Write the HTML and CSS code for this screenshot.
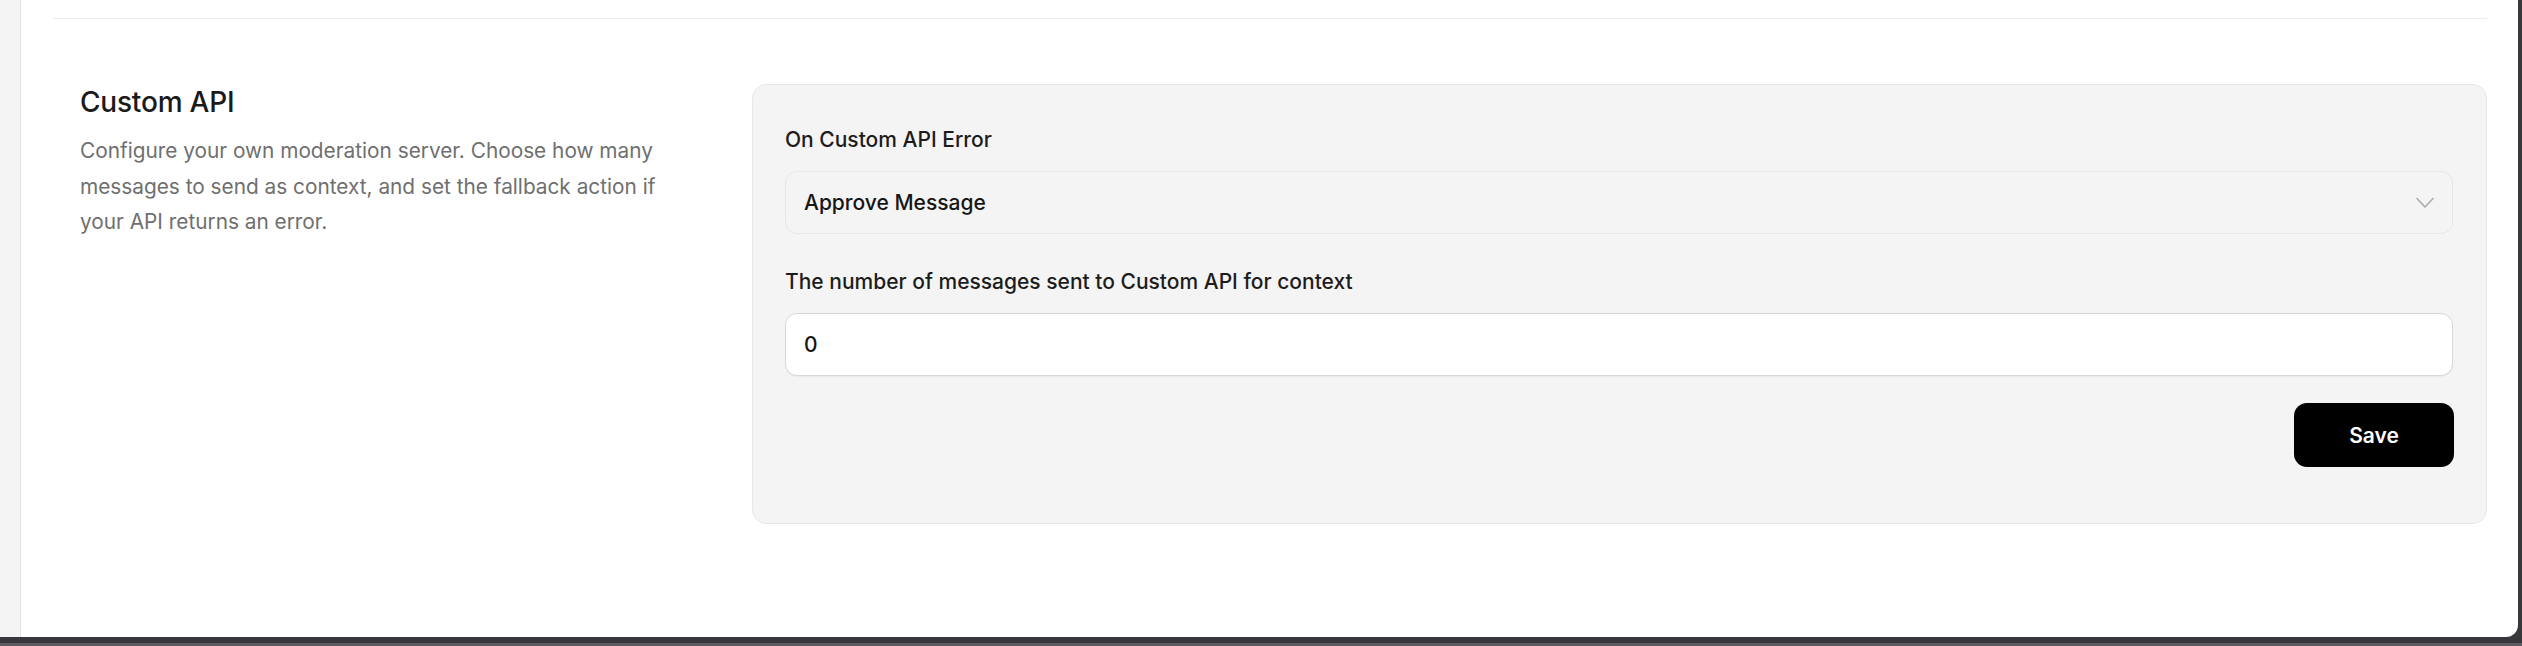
FILE: index.html
```html
<!DOCTYPE html>
<html lang="en">
<head>
<meta charset="utf-8">
<title>Custom API</title>
<link rel="stylesheet" href="styles.css">
</head>
<body>
<div class="window">
  <aside class="rail"></aside>
  <main class="main">
    <section class="settings-section">
      <div class="section-info">
        <h2 class="section-title">Custom API</h2>
        <p class="section-desc">Configure your own moderation server. Choose how many messages to send as context, and set the fallback action if your API returns an error.</p>
      </div>
      <form class="card" onsubmit="return false;">
        <div class="field">
          <label class="field-label" for="on-error">On Custom API Error</label>
          <div class="select">
            <span class="select-value" id="on-error">Approve Message</span>
            <svg class="chevron" width="18" height="12" viewBox="0 0 18 12" aria-hidden="true">
              <path d="M1 1.5 L9 10 L17 1.5" fill="none" stroke="#ababab" stroke-width="1.6" stroke-linecap="round" stroke-linejoin="round"/>
            </svg>
          </div>
        </div>
        <div class="field">
          <label class="field-label" for="ctx-count">The number of messages sent to Custom API for context</label>
          <input class="text-input" id="ctx-count" type="text" value="0">
        </div>
        <div class="actions">
          <button class="btn-save" type="submit">Save</button>
        </div>
      </form>
    </section>
  </main>
</div>
</body>
</html>
```

FILE: styles.css
```css
html, body {
  margin: 0;
  padding: 0;
}

body {
  width: 2522px;
  height: 646px;
  overflow: hidden;
  background: linear-gradient(to bottom, #38373c 0, #38373c 643px, #5c5b60 643px);
  font-family: Inter, "Noto Sans", sans-serif;
  color: #1b1b1b;
}

.window {
  display: flex;
  width: 2518px;
  height: 637px;
  background: #ffffff;
  border-bottom-right-radius: 12px;
  overflow: hidden;
}

.rail {
  width: 20px;
  flex: none;
  background: #f4f4f4;
  border-right: 1px solid #e4e4e4;
}

.main {
  flex: 1;
  padding: 18px 31px 0 32px;
}

.settings-section {
  display: flex;
  border-top: 1px solid #ececec;
  padding-top: 65px;
}

.section-info {
  width: 699px;
  flex: none;
  box-sizing: border-box;
  padding: 0 80px 0 27px;
}

.section-title {
  margin: 0;
  font-size: 28px;
  line-height: 36px;
  font-weight: 500;
  color: #1a1a1a;
  letter-spacing: -0.2px;
}

.section-desc {
  margin: 13px 0 0;
  font-size: 20.8px;
  line-height: 35.5px;
  font-weight: 400;
  color: #6f6f6f;
}

.card {
  flex: 1;
  box-sizing: border-box;
  height: 440px;
  margin: 0;
  padding: 40px 33px 0 32px;
  background: #f4f4f4;
  border: 1px solid #e8e8e8;
  border-radius: 14px;
}

.field + .field {
  margin-top: 33px;
}

.field-label {
  display: block;
  margin-bottom: 16px;
  font-size: 21px;
  line-height: 30px;
  font-weight: 500;
  color: #1c1c1c;
}

.select {
  display: flex;
  align-items: center;
  justify-content: space-between;
  box-sizing: border-box;
  height: 63px;
  padding: 0 18px 0 18px;
  background: #f4f4f4;
  border: 1px solid #e6e6e6;
  border-radius: 12px;
}

.select-value,
.text-input {
  font-family: Inter, "Noto Sans", sans-serif;
  font-size: 21px;
  font-weight: 500;
  color: #161616;
}

.chevron {
  display: block;
  margin-top: 1px;
}

.text-input {
  display: block;
  width: 100%;
  box-sizing: border-box;
  height: 63px;
  margin: 0;
  padding: 0 18px;
  background: #ffffff;
  border: 1px solid #d7d7d7;
  border-radius: 12px;
  box-shadow: 0 1px 1px rgba(0, 0, 0, 0.04);
  outline: none;
}

.actions {
  display: flex;
  justify-content: flex-end;
  margin-top: 27px;
}

.btn-save {
  width: 160px;
  height: 64px;
  margin-right: -1px;
  background: #000000;
  color: #ffffff;
  border: none;
  border-radius: 13px;
  font-family: Inter, "Noto Sans", sans-serif;
  font-size: 21px;
  font-weight: 600;
  cursor: pointer;
}
```
